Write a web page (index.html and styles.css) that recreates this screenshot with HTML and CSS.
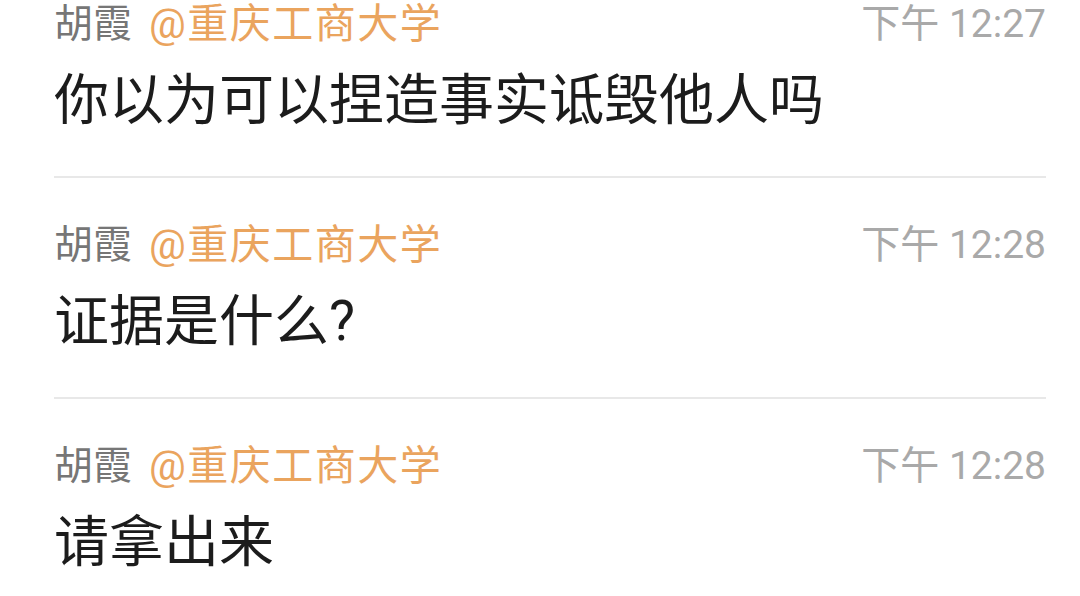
FILE: index.html
```html
<!DOCTYPE html>
<html lang="zh-CN">
<head>
    <meta charset="UTF-8">
    <meta name="viewport" content="width=device-width, initial-scale=1.0">
    <title>消息</title>
    <link rel="stylesheet" href="styles.css">
</head>
<body>
    <div class="list">
        <div class="item">
            <div class="meta">
                <span class="name">胡霞</span>
                <span class="org">@重庆工商大学</span>
                <span class="time">下午 12:27</span>
            </div>
            <div class="text">你以为可以捏造事实诋毁他人吗</div>
        </div>

        <div class="item">
            <div class="meta">
                <span class="name">胡霞</span>
                <span class="org">@重庆工商大学</span>
                <span class="time">下午 12:28</span>
            </div>
            <div class="text">证据是什么?</div>
        </div>

        <div class="item">
            <div class="meta">
                <span class="name">胡霞</span>
                <span class="org">@重庆工商大学</span>
                <span class="time">下午 12:28</span>
            </div>
            <div class="text">请拿出来</div>
        </div>
    </div>
</body>
</html>
```

FILE: styles.css
```css
body {
    margin: 0;
    background: #fff;
    font-family: Roboto, "Noto Sans CJK SC", sans-serif;
}

.list {
    padding: 2px 34px 0 54px;
}

.item {
    padding: 45px 0 40px;
    border-bottom: 2px solid #e8e8e8;
}

.item:first-child {
    padding-top: 0;
}

.item:last-child {
    border-bottom: none;
}

.meta {
    display: flex;
    align-items: center;
    height: 44px;
    font-size: 39px;
    line-height: 44px;
}

.name {
    color: #767676;
}

.org {
    margin-left: 17px;
    color: #eaa45e;
    font-size: 41px;
    letter-spacing: 1.5px;
}

.time {
    margin-left: auto;
    color: #a9a9a9;
    font-size: 39px;
}

.text {
    margin-top: 18px;
    font-size: 55px;
    line-height: 72px;
    color: #1c1c1c;
}
```
